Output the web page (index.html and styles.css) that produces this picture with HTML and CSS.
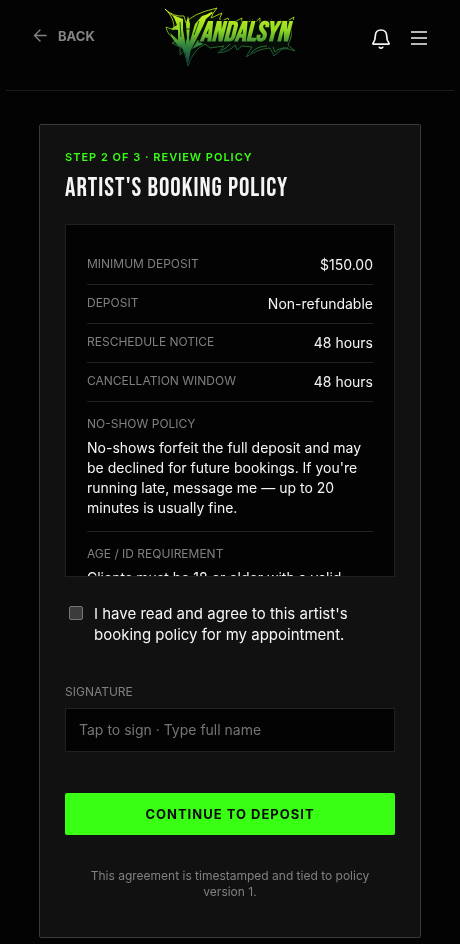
FILE: index.html
```html
<!DOCTYPE html>
<html lang="en">
<head>
    <meta charset="UTF-8" />
    <meta name="viewport" content="width=device-width, initial-scale=1.0"/>
    <title>Vandalsyn - Booking Policy</title>
    <link rel="stylesheet" href="styles.css">
</head>
<body>

    <header class="topbar">
        <a class="back" href="#">
            <svg width="16" height="16" viewBox="0 0 16 16" fill="none" stroke="currentColor" stroke-width="1.4" stroke-linecap="round" stroke-linejoin="round" aria-hidden="true">
                <path d="M14 7.500H2.500M8 2 2.500 7.500 8 13"/>
            </svg>
            BACK
        </a>

        <a class="logo" href="#" aria-label="Vandalsyn home">
            <svg width="134" height="62" viewBox="0 0 134 62" aria-hidden="true">
                <defs>
                    <linearGradient id="acid" gradientUnits="userSpaceOnUse" x1="0" y1="6" x2="0" y2="54">
                        <stop offset="0" stop-color="#d4f51c"/>
                        <stop offset="0.4" stop-color="#8fd822"/>
                        <stop offset="0.7" stop-color="#34853f"/>
                        <stop offset="1" stop-color="#1b5540"/>
                    </linearGradient>
                </defs>
                <!-- thorn outline -->
                <path fill="#050f07" stroke="url(#acid)" stroke-width="0.8" d="M2 4Q10 12 21 11L23 18Q28 9 54 3Q49 9 48 13L59 8Q56 13 57 17L65 13 67 19 79 13 78 20 90 15 89 20 97 13 97 19 109 15 109 20 118 15 118 20 131 12Q127 23 128 32L125 40 132 46Q122 42 118 45L111 51 107 43Q95 44 83 52L89 42 79 41 74 45 72 40Q67 47 55 48L61 41 47 43 42 39Q30 45 25 61L21 46 17 50 17 42 9 38 14 36Q4 30 3 22L11 25Q12 13 2 4Z"/>
                <!-- blades and dagger of the first letter -->
                <path fill="url(#acid)" d="M10 10 20 14 20 25 22 36 22 48 15 37 15 25 8 24 14 20ZM27 47 27 36 32 19 39 11 51 7 43 14 40 21 34 33ZM25 11 27 19 26 33 28 43 25 59 21 43 24 33 23 19ZM7 28 15 35 18 43Q10 37 7 28ZM35 35 40 39 29 44Z"/>
                <path fill="none" stroke="#0a1a08" stroke-width="0.8" d="M17 17 18 32M36 16 31 30M20 24H30"/>
                <!-- wordmark -->
                <text class="logo-text" x="37" y="36" font-size="28" fill="url(#acid)" stroke="#050f07" stroke-width="2" paint-order="stroke">ANDALSYN</text>
                <!-- lower thorns -->
                <path fill="none" stroke="url(#acid)" stroke-width="0.9" d="M5 7Q15 13 15 23M49 7Q40 11 37 20M58 46Q64 43 67 39M88 48Q94 41 104 41M110 42 112 47Q117 42 125 43"/>
            </svg>
        </a>

        <div class="actions">
            <button class="icon-btn" type="button" aria-label="Notifications">
                <svg width="20" height="24" viewBox="0 -2 20 24" fill="none" stroke="currentColor" stroke-width="1.7" stroke-linecap="round" stroke-linejoin="round" aria-hidden="true">
                    <path d="M10 2C6.500 2 4.300 4.500 4.300 8c0 4-.8 5.500-2.300 7.200-.3.500-.1 1 .5 1h15c.6 0 .8-.5.5-1-1.500-1.700-2.300-3.200-2.300-7.200C15.700 4.500 13.500 2 10 2ZM8.300 19.300c.9 1.200 2.500 1.200 3.400 0"/>
                </svg>
            </button>
            <button class="icon-btn" type="button" aria-label="Menu">
                <svg width="18" height="16" viewBox="0 0 18 16" fill="none" stroke="currentColor" stroke-width="1.7" aria-hidden="true">
                    <path d="M1 2h16M1 8h16M1 14h16"/>
                </svg>
            </button>
        </div>
    </header>

    <main class="card">
        <p class="step">STEP 2 OF 3 · REVIEW POLICY</p>
        <h1>ARTIST'S BOOKING POLICY</h1>

        <form>
            <div class="policy" tabindex="0">
                <dl>
                    <div class="row">
                        <dt>MINIMUM DEPOSIT</dt>
                        <dd>$150.00</dd>
                    </div>
                    <div class="row">
                        <dt>DEPOSIT</dt>
                        <dd>Non-refundable</dd>
                    </div>
                    <div class="row">
                        <dt>RESCHEDULE NOTICE</dt>
                        <dd>48 hours</dd>
                    </div>
                    <div class="row">
                        <dt>CANCELLATION WINDOW</dt>
                        <dd>48 hours</dd>
                    </div>
                    <div class="section">
                        <dt>NO-SHOW POLICY</dt>
                        <dd>No-shows forfeit the full deposit and may be declined for future bookings. If you're running late, message me — up to 20 minutes is usually fine.</dd>
                    </div>
                    <div class="section">
                        <dt>AGE / ID REQUIREMENT</dt>
                        <dd>Clients must be 18 or older with a valid</dd>
                    </div>
                </dl>
            </div>

            <label class="agree" for="agree">
                <input type="checkbox" id="agree" />
                <span>I have read and agree to this artist's booking policy for my appointment.</span>
            </label>

            <label class="field-label" for="signature">SIGNATURE</label>
            <input class="signature" type="text" id="signature" placeholder="Tap to sign · Type full name" />

            <button class="submit" type="submit">CONTINUE TO DEPOSIT</button>
        </form>

        <p class="footnote">This agreement is timestamped and tied to policy version 1.</p>
    </main>

</body>
</html>
```

FILE: styles.css
```css
* {
    box-sizing: border-box;
}

body {
    margin: 0;
    padding: 0 6px 6px;
    background: #030303;
    color: #f5f5f5;
    font-family: Inter, sans-serif;
    font-size: 14px;
    line-height: 20px;
}

h1, p, dl, dt, dd {
    margin: 0;
}

.topbar {
    display: grid;
    grid-template-columns: 1fr auto 1fr;
    align-items: start;
    padding: 5px 26px 23px;
    border-bottom: 1px solid #1c1c1c;
}

.back {
    display: flex;
    align-items: center;
    gap: 10px;
    padding-top: 21px;
    color: #858585;
    font-size: 13px;
    font-weight: 700;
    text-decoration: none;
}

.logo svg {
    display: block;
}

.logo-text {
    font-family: "Bebas Neue", "Liberation Sans", sans-serif;
    font-style: italic;
    font-weight: 700;
}

.actions {
    display: flex;
    justify-content: flex-end;
    align-items: center;
    gap: 19px;
    padding-top: 21px;
}

.icon-btn {
    display: flex;
    padding: 0;
    border: none;
    background: none;
    color: #f5f5f5;
    cursor: pointer;
}

.card {
    margin: 33px 33px 0;
    padding: 22px 25px 37px;
    background: #111;
    border: 1px solid #3a3a3a;
    border-radius: 2px;
}

.step {
    color: #39ff14;
    font-size: 11px;
    font-weight: 600;
    letter-spacing: 1px;
}

h1 {
    margin: 7px 0 20px;
    font-family: "Bebas Neue", "Liberation Sans", sans-serif;
    font-size: 26px;
    font-weight: 400;
    line-height: 30px;
    letter-spacing: 1px;
}

.policy {
    max-height: 353px;
    padding: 21px;
    overflow-y: auto;
    scrollbar-width: none;
    background: #030303;
    border: 1px solid #202020;
}

dt, .field-label {
    color: #808080;
    font-size: 12px;
    line-height: 18px;
}

.row {
    display: flex;
    justify-content: space-between;
    align-items: flex-start;
    padding: 9px 0;
    border-bottom: 1px solid #222;
}

.section {
    padding: 13px 0;
    border-bottom: 1px solid #222;
}

.section:last-child {
    border-bottom: none;
}

.section dd {
    margin-top: 5px;
}

.agree {
    display: flex;
    align-items: flex-start;
    gap: 11px;
    margin: 26px 0 38px;
    padding: 0 4px;
    font-size: 15px;
    line-height: 21px;
}

.agree input {
    appearance: none;
    flex: none;
    width: 14px;
    height: 14px;
    margin: 3px 0 0;
    background: #3b3b3b;
    border: 1px solid #757575;
    border-radius: 2px;
}

.agree input:checked {
    background: #39ff14;
}

.field-label {
    display: block;
    margin-bottom: 7px;
}

.signature {
    display: block;
    width: 100%;
    padding: 11px 13px;
    background: #030303;
    border: 1px solid #202020;
    border-radius: 0;
    color: #f5f5f5;
    font-family: inherit;
    font-size: 14px;
    line-height: 20px;
}

.signature::placeholder {
    color: #757575;
}

.submit {
    display: block;
    width: 100%;
    margin: 41px 0 33px;
    padding: 11px;
    background: #39ff14;
    border: none;
    border-radius: 2px;
    color: #0a0a0a;
    font-family: inherit;
    font-size: 13px;
    font-weight: 700;
    line-height: 20px;
    letter-spacing: 1px;
    cursor: pointer;
}

.footnote {
    padding: 0 16px;
    color: #808080;
    font-size: 12px;
    line-height: 16px;
    text-align: center;
}
```
